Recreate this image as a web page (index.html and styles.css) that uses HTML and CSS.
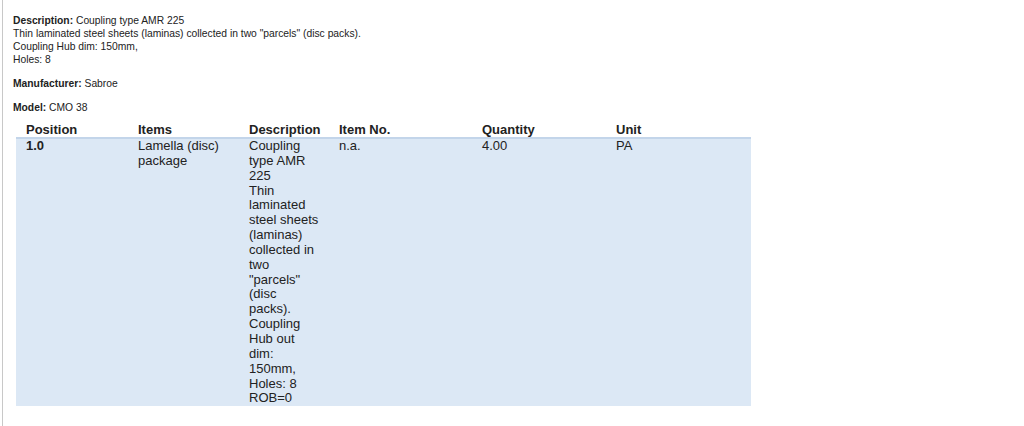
FILE: index.html
```html
<!DOCTYPE html>
<html>
<head>
<meta charset="utf-8">
<link rel="stylesheet" href="styles.css">
</head>
<body>
<div class="page">
  <div class="info">
    <p class="para"><b>Description:</b> Coupling type AMR 225<br>Thin laminated steel sheets (laminas) collected in two "parcels" (disc packs).<br>Coupling Hub dim: 150mm,<br>Holes: 8</p>
    <p class="para"><b>Manufacturer:</b> Sabroe</p>
    <p class="para"><b>Model:</b> CMO 38</p>
  </div>
  <table class="parts">
    <colgroup>
      <col class="c1"><col class="c2"><col class="c3"><col class="c4"><col class="c5"><col class="c6">
    </colgroup>
    <thead>
      <tr><th>Position</th><th>Items</th><th>Description</th><th>Item No.</th><th>Quantity</th><th>Unit</th></tr>
    </thead>
    <tbody>
      <tr>
        <td class="pos">1.0</td>
        <td>Lamella (disc) package</td>
        <td class="desc">Coupling type AMR 225<br>Thin laminated steel sheets (laminas) collected in two "parcels" (disc packs). Coupling Hub out dim: 150mm, Holes: 8<br>ROB=0</td>
        <td>n.a.</td>
        <td>4.00</td>
        <td>PA</td>
      </tr>
    </tbody>
  </table>
</div>
</body>
</html>
```

FILE: styles.css
```css
html, body {
  margin: 0;
  padding: 0;
  background: #fff;
}
body {
  font-family: "Liberation Sans", Arial, sans-serif;
  color: #222;
}
.page {
  min-height: 426px;
  box-sizing: border-box;
  margin-left: 2px;
  border-left: 1px solid #c8c8c8;
  padding: 14px 0 0 10px;
}
.info {
  font-size: 10.3px;
  line-height: 13px;
}
.para {
  margin: 0 0 11px 0;
}
.parts {
  border-collapse: collapse;
  table-layout: fixed;
  width: 735px;
  margin-left: 3px;
  margin-top: -3px;
  font-size: 13px;
  line-height: 15px;
}
.c1 { width: 112px; }
.c2 { width: 111px; }
.c3 { width: 90px; }
.c4 { width: 143px; }
.c5 { width: 134px; }
.c6 { width: 145px; }
.parts th {
  text-align: left;
  font-weight: bold;
  padding: 0 4px 0 10px;
  border-bottom: 2px solid #c3d5ea;
  vertical-align: bottom;
}
.parts td {
  background: #dce8f5;
  padding: 0 4px 0 10px;
  line-height: 14.85px;
  vertical-align: top;
}
.parts td.desc {
  padding-right: 10px;
}
.parts td.pos {
  font-weight: bold;
}
```
